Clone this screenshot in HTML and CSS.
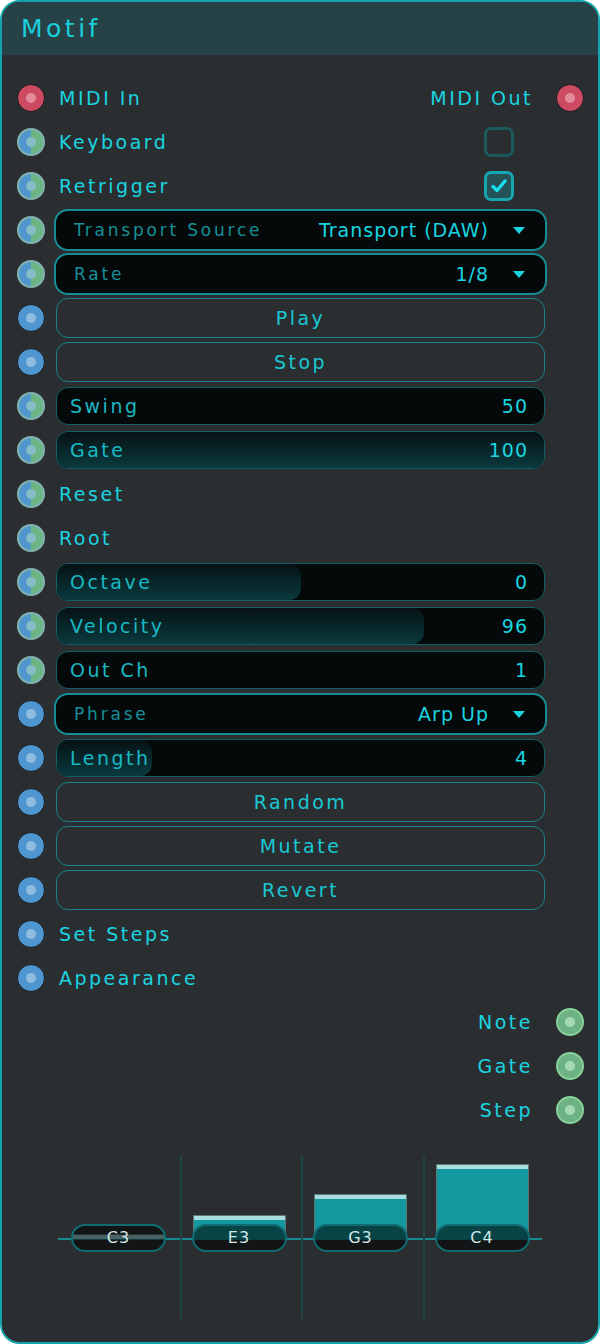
FILE: index.html
```html
<!DOCTYPE html>
<html lang="en">
<head>
<meta charset="utf-8">
<title>Motif</title>
<link rel="stylesheet" href="styles.css">
</head>
<body>
<div class="panel">
	<div class="head">Motif</div>

	<div class="rows">
		<div class="row">
			<span class="dot red"></span>
			<div class="split"><span class="lbl">MIDI In</span><span class="lbl">MIDI Out</span></div>
			<span class="dot red"></span>
		</div>
		<div class="row">
			<span class="dot half"></span>
			<div class="split"><span class="lbl">Keyboard</span><span class="check"></span></div>
		</div>
		<div class="row">
			<span class="dot half"></span>
			<div class="split"><span class="lbl">Retrigger</span>
				<span class="check on"><svg width="16" height="14" viewBox="0 0 16 14"><path d="M2 7.5 L6 11.5 L14 2" fill="none" stroke="#1adfea" stroke-width="3.4" stroke-linecap="round" stroke-linejoin="round"/></svg></span>
			</div>
		</div>
		<div class="row">
			<span class="dot half"></span>
			<div class="drop"><span class="name">Transport Source</span><span class="val">Transport (DAW)</span><svg class="tri" width="12" height="7" viewBox="0 0 12 7"><polygon points="0,0 12,0 6,7" fill="#1ad4e0"/></svg></div>
		</div>
		<div class="row">
			<span class="dot half"></span>
			<div class="drop"><span class="name">Rate</span><span class="val">1/8</span><svg class="tri" width="12" height="7" viewBox="0 0 12 7"><polygon points="0,0 12,0 6,7" fill="#1ad4e0"/></svg></div>
		</div>
		<div class="row">
			<span class="dot blue"></span>
			<div class="btn">Play</div>
		</div>
		<div class="row">
			<span class="dot blue"></span>
			<div class="btn">Stop</div>
		</div>
		<div class="row">
			<span class="dot half"></span>
			<div class="slider"><span class="fill" style="width:0%"></span><span class="name">Swing</span><span class="val">50</span></div>
		</div>
		<div class="row">
			<span class="dot half"></span>
			<div class="slider"><span class="fill" style="width:100%"></span><span class="name">Gate</span><span class="val">100</span></div>
		</div>
		<div class="row">
			<span class="dot half"></span>
			<div class="split"><span class="lbl">Reset</span></div>
		</div>
		<div class="row">
			<span class="dot half"></span>
			<div class="split"><span class="lbl">Root</span></div>
		</div>
		<div class="row">
			<span class="dot half"></span>
			<div class="slider"><span class="fill" style="width:50%"></span><span class="name">Octave</span><span class="val">0</span></div>
		</div>
		<div class="row">
			<span class="dot half"></span>
			<div class="slider"><span class="fill" style="width:75.4%"></span><span class="name">Velocity</span><span class="val">96</span></div>
		</div>
		<div class="row">
			<span class="dot half"></span>
			<div class="slider"><span class="fill" style="width:0%"></span><span class="name">Out Ch</span><span class="val">1</span></div>
		</div>
		<div class="row">
			<span class="dot blue"></span>
			<div class="drop"><span class="name">Phrase</span><span class="val">Arp Up</span><svg class="tri" width="12" height="7" viewBox="0 0 12 7"><polygon points="0,0 12,0 6,7" fill="#1ad4e0"/></svg></div>
		</div>
		<div class="row">
			<span class="dot blue"></span>
			<div class="slider"><span class="fill" style="width:19.6%"></span><span class="name">Length</span><span class="val">4</span></div>
		</div>
		<div class="row">
			<span class="dot blue"></span>
			<div class="btn">Random</div>
		</div>
		<div class="row">
			<span class="dot blue"></span>
			<div class="btn">Mutate</div>
		</div>
		<div class="row">
			<span class="dot blue"></span>
			<div class="btn">Revert</div>
		</div>
		<div class="row">
			<span class="dot blue"></span>
			<div class="split"><span class="lbl">Set Steps</span></div>
		</div>
		<div class="row">
			<span class="dot blue"></span>
			<div class="split"><span class="lbl">Appearance</span></div>
		</div>
		<div class="row">
			<span></span>
			<div class="split end"><span class="lbl">Note</span></div>
			<span class="dot green"></span>
		</div>
		<div class="row">
			<span></span>
			<div class="split end"><span class="lbl">Gate</span></div>
			<span class="dot green"></span>
		</div>
		<div class="row">
			<span></span>
			<div class="split end"><span class="lbl">Step</span></div>
			<span class="dot green"></span>
		</div>
	</div>

	<div class="chart">
		<div class="axis"></div>
		<div class="col">
			<span class="bar" style="height:5px"></span>
			<span class="pill">C3</span>
		</div>
		<div class="col">
			<span class="bar" style="height:24px"></span>
			<span class="pill">E3</span>
		</div>
		<div class="col">
			<span class="bar" style="height:45px"></span>
			<span class="pill">G3</span>
		</div>
		<div class="col">
			<span class="bar" style="height:75px"></span>
			<span class="pill">C4</span>
		</div>
	</div>
</div>
</body>
</html>
```

FILE: styles.css
```css
body {
	margin: 0;
	background: #ffffff;
	font-family: "DejaVu Sans", sans-serif;
}

.panel {
	width: 600px;
	height: 1344px;
	box-sizing: border-box;
	border: 2px solid #14a2ac;
	border-radius: 20px;
	background: #2a2e30;
	overflow: hidden;
}

.head {
	height: 53px;
	line-height: 53px;
	padding-left: 19px;
	background: #264246;
	color: #1ad0dc;
	font-size: 25px;
	letter-spacing: 3.5px;
}

.rows {
	padding-top: 21px;
}

.row {
	height: 44px;
	display: grid;
	grid-template-columns: 28px 1fr 28px;
	column-gap: 11px;
	align-items: center;
	padding: 0 14px 0 15px;
}

/* round port lamps */
.dot {
	width: 28px;
	height: 28px;
	box-sizing: border-box;
	border-radius: 50%;
	display: flex;
	align-items: center;
	justify-content: center;
}
.dot::after {
	content: "";
	width: 10px;
	height: 10px;
	border-radius: 50%;
}
.dot.red {
	background: #cc4b63;
	border: 1px solid #1a1c1e;
}
.dot.red::after {
	background: #e58c9c;
}
.dot.blue {
	background: #4f95cf;
	border: 1px solid #1c2022;
}
.dot.blue::after {
	background: #8fbde2;
}
.dot.half {
	background: linear-gradient(90deg, #5195cd 50%, #6db585 50%);
	border: 2px solid #82b2b0;
}
.dot.half::after {
	background: #86bcc6;
}
.dot.green {
	background: #6cb284;
	border: 2px solid #86d09a;
}
.dot.green::after {
	background: #a6d8b6;
}

.lbl {
	color: #1ad4e0;
	font-size: 19px;
	letter-spacing: 2.5px;
}

.split {
	display: flex;
	align-items: center;
	justify-content: space-between;
	padding: 0 12px 0 3px;
}
.split.end {
	justify-content: flex-end;
}

.check {
	width: 30px;
	height: 30px;
	box-sizing: border-box;
	border: 3px solid #1b5a5e;
	border-radius: 7px;
	margin-right: 19px;
	display: flex;
	align-items: center;
	justify-content: center;
}
.check.on {
	border-color: #16a6b0;
	background: #245257;
}

.drop {
	height: 42px;
	margin: 0 -2px;
	box-sizing: border-box;
	border: 2px solid #178c94;
	border-radius: 14px;
	background: #050909;
	display: flex;
	align-items: center;
	padding: 0 20px 0 18px;
}
.drop .name {
	flex: 1;
	color: #178f98;
	font-size: 17px;
	letter-spacing: 2.8px;
}
.drop .val {
	color: #1ad4e0;
	font-size: 19px;
	letter-spacing: 1px;
	margin-right: 24px;
}

.btn {
	height: 40px;
	box-sizing: border-box;
	border: 1px solid #17848c;
	border-radius: 12px;
	display: flex;
	align-items: center;
	justify-content: center;
	color: #1ac8d4;
	font-size: 19px;
	letter-spacing: 2.5px;
}

.slider {
	height: 38px;
	box-sizing: border-box;
	border: 1px solid #135f65;
	border-radius: 12px;
	background: #050909;
	position: relative;
	overflow: hidden;
	display: flex;
	align-items: center;
	justify-content: space-between;
	padding: 0 16px 0 13px;
}
.slider .fill {
	position: absolute;
	left: 0;
	top: 0;
	bottom: 0;
	border-radius: 12px;
	background: linear-gradient(#061214, #0a3a3e);
}
.slider .name,
.slider .val {
	position: relative;
	font-size: 19px;
}
.slider .name {
	color: #1ab8c4;
	letter-spacing: 2.5px;
}
.slider .val {
	color: #1ad4e0;
	letter-spacing: 1px;
}

/* step chart */
.chart {
	margin: 24px 0 0 56px;
	width: 486px;
	height: 163px;
	position: relative;
	display: grid;
	grid-template-columns: repeat(4, 1fr);
}
.axis {
	position: absolute;
	left: 0;
	right: 2px;
	top: 82px;
	height: 2px;
	background: #168890;
}
.col {
	position: relative;
}
.col + .col {
	border-left: 2px solid #1f4548;
}
.bar {
	position: absolute;
	left: 14px;
	width: 93px;
	bottom: 80px;
	box-sizing: border-box;
	background: #14989f;
	border: 1px solid #5f7676;
	border-bottom: 0;
	box-shadow: inset 0 4px 0 #a9dcdc;
}
.col + .col .bar {
	left: 11px;
}
.pill {
	position: absolute;
	left: 13px;
	top: 68px;
	width: 95px;
	height: 28px;
	box-sizing: border-box;
	border: 2px solid #0f6c72;
	border-radius: 14px;
	background: rgba(0, 0, 0, 0.56);
	color: #cfe8e8;
	font-size: 16px;
	letter-spacing: 1px;
	line-height: 24px;
	text-align: center;
}
.col + .col .pill {
	left: 10px;
}
```
